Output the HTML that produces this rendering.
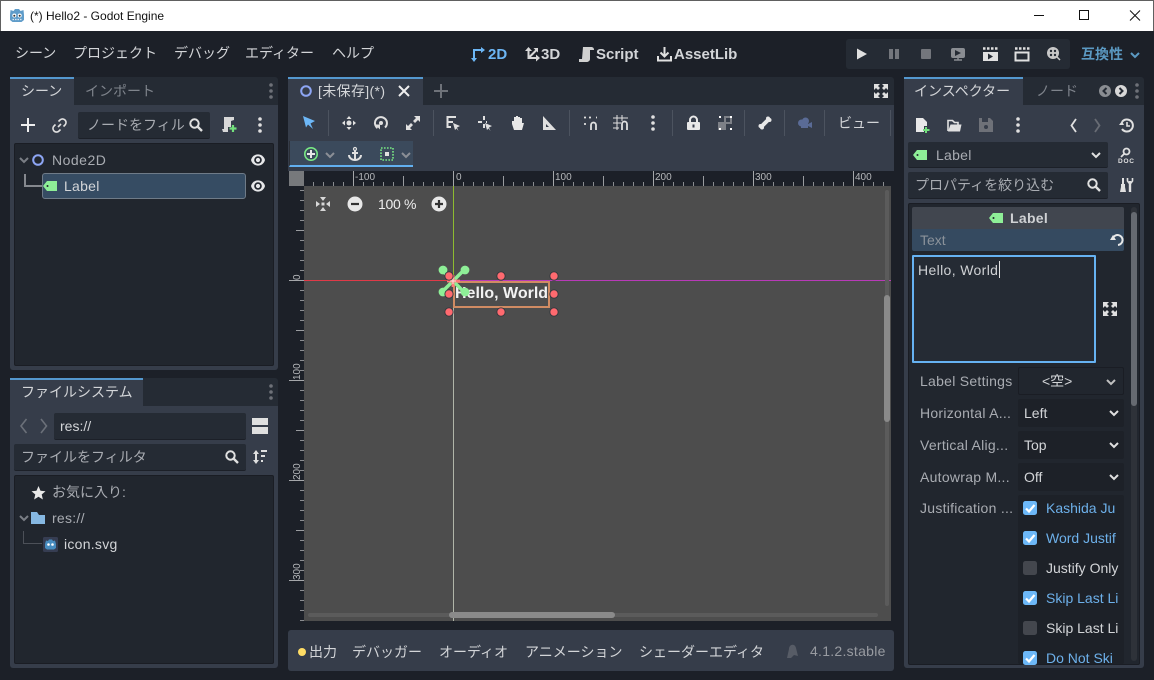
<!DOCTYPE html>
<html><head><meta charset="utf-8"><style>
html,body{margin:0;padding:0;background:#1c2028;}
#w{position:relative;width:1154px;height:680px;overflow:hidden;background:#1c2028;font-family:"Liberation Sans","Noto Sans CJK JP",sans-serif;font-size:14px;color:#d3d5d8;}
#w div{position:absolute;box-sizing:border-box;}
.t{white-space:nowrap;height:20px;line-height:20px;}
.l{letter-spacing:.27px}
.d{color:#7f848c}.m{color:#a9acb2}
.p{background:#363d4a}.f{background:#252b34;border-radius:2px;border-bottom:1px solid #1c2028}
.b{background:#21262e;border:1px solid #1a1d24;border-radius:2px}
.s{width:1px;height:26px;top:110px;background:#4c535f}
.bd{font-weight:bold;font-size:15px}
svg{position:absolute;overflow:visible}
</style></head><body><div id="w">
<svg width="0" height="0" style="position:absolute"><defs>
<g id="eye"><path d="M-7 0C-5-7.500 5-7.500 7 0C5 7.500-5 7.500-7 0Z" fill="#e6e7e9"/><circle r="3.800" fill="#21262e"/><circle r="2.100" fill="#e6e7e9"/></g>
<g id="tag"><path d="M0 0L4-5H14V5H4Z" fill="#8eef97"/><circle cx="4.500" cy="0" r="1" fill="#21262e"/></g>
<g id="mag"><circle cx="-1.500" cy="-1.500" r="4.200" fill="none" stroke="#e0e0e0" stroke-width="2"/><path d="M1.500 1.500L6 6" stroke="#e0e0e0" stroke-width="2.400"/></g>
<g id="keb"><circle cy="-6" r="1.800"/><circle r="1.800"/><circle cy="6" r="1.800"/></g>
<g id="chev"><path d="M-4-2L0 2L4-2" fill="none" stroke="currentColor" stroke-width="2"/></g>
<g id="exp" fill="#e0e0e0"><path d="M-7-7H-1L-3-5L-1-3L-3-1L-5-3L-7-1Z"/><path d="M7-7V-1L5-3L3-1L1-3L3-5L1-7Z"/><path d="M-7 7V1L-5 3L-3 1L-1 3L-3 5L-1 7Z"/><path d="M7 7H1L3 5L1 3L3 1L5 3L7 1Z"/></g>
<g id="cb1"><rect x="-7" y="-7" width="14" height="14" rx="2.500" fill="#6db8f8"/><path d="M-4 0.500L-1 3.500L4.500-3" fill="none" stroke="#fff" stroke-width="2.200"/></g>
<g id="cb0"><rect x="-7" y="-7" width="14" height="14" rx="2.500" fill="#44474e"/></g>
<g id="h"><circle r="4.600" fill="#33373d"/><circle r="3.700" fill="#ff6a6f"/></g>
</defs></svg>

<!-- title bar -->
<div style="left:0;top:0;width:1154px;height:31px;background:#fff;border:1px solid #606060;border-bottom:0"></div>
<svg style="left:9px;top:8px" width="16" height="15" viewBox="0 0 15 15"><path d="M0.500 7L1 2L4 3L5.500 1H9.500L11 3L14 2L14.500 7V12L12 14H3L.5 12Z" fill="#5f9cc9"/><circle cx="4.800" cy="7.500" r="2" fill="#fff"/><circle cx="10.200" cy="7.500" r="2" fill="#fff"/><circle cx="4.800" cy="7.800" r="1" fill="#333"/><circle cx="10.200" cy="7.800" r="1" fill="#333"/><path d="M3 11.500H12" stroke="#dbe8f3" stroke-width="1.200" stroke-dasharray="1.500 1"/></svg>
<div class="t" style="left:30px;top:6px;font-size:12px;color:#111">(*) Hello2 - Godot Engine</div>
<svg style="left:1030px;top:8px" width="115" height="16"><path d="M4 7.500H14" stroke="#111" stroke-width="1"/><rect x="49.500" y="2.500" width="9" height="9" fill="none" stroke="#111"/><path d="M100 2.500L110 12.500M110 2.500L100 12.500" stroke="#111"/></svg>

<!-- menu -->
<div class="t" style="left:15px;top:43px">シーン</div>
<div class="t" style="left:73px;top:43px">プロジェクト</div>
<div class="t" style="left:174px;top:43px">デバッグ</div>
<div class="t" style="left:245px;top:43px">エディター</div>
<div class="t" style="left:332px;top:43px">ヘルプ</div>

<svg style="left:471px;top:47px" width="15" height="15"><path d="M3 15L0 11H2V2H10V0L14 3L10 6V4H4V11H6Z" fill="#6cb6f5"/></svg>
<div class="t bd" style="left:488px;top:45px;color:#6cb6f5">2D</div>
<svg style="left:525px;top:47px" width="15" height="15"><path d="M3.500 1V11H13M3.500 11L12 2.500" fill="none" stroke="#d8d8d8" stroke-width="2"/><path d="M0 4L3.500 0L7 4ZM11 7.500L15 11L11 14.500ZM8.500 1H13V5.500Z" fill="#d8d8d8"/></svg>
<div class="t bd" style="left:541px;top:45px">3D</div>
<svg style="left:579px;top:47px" width="15" height="15"><path d="M4 0H12C14 0 15 1 15 3H11V12C11 14 9 15 7.500 15H0V12H3Z" fill="#d0d0d0"/></svg>
<div class="t bd" style="left:596px;top:45px">Script</div>
<svg style="left:657px;top:47px" width="15" height="15"><path d="M7.500 0V9M3.500 5.500L7.500 9.500L11.500 5.500M1 9V13.500H14V9" fill="none" stroke="#e0e0e0" stroke-width="2"/></svg>
<div class="t bd" style="left:674px;top:45px">AssetLib</div>

<div style="left:846px;top:39px;width:224px;height:30px;background:#252b34;border-radius:3px"></div>
<svg style="left:846px;top:39px" width="224" height="30">
<path d="M11 9.500L21 15L11 20.500Z" fill="#e0e0e0"/>
<rect x="43" y="10" width="4" height="10" fill="#73767c"/><rect x="49" y="10" width="4" height="10" fill="#73767c"/>
<rect x="75" y="10" width="10" height="10" rx="1" fill="#73767c"/>
<rect x="105" y="9" width="14" height="10" rx="2" fill="#8a8d92"/><path d="M109 11L115 14L109 17Z" fill="#252b34"/><path d="M108 21H116M112 19V21" stroke="#8a8d92" stroke-width="1.500"/>
<rect x="137" y="13" width="15" height="9" fill="#e0e0e0"/><path d="M137 9.500H152" stroke="#e0e0e0" stroke-width="2.500" stroke-dasharray="2.500 1.500"/><path d="M142 14.500L147 17.500L142 20.500Z" fill="#252b34"/>
<path d="M169.500 13.500H182.500V21.500H169.500Z" fill="none" stroke="#e0e0e0" stroke-width="2"/><path d="M169 9.500H184" stroke="#e0e0e0" stroke-width="2.500" stroke-dasharray="2.500 1.500"/>
<circle cx="207" cy="14" r="6" fill="#c8c8c8"/><circle cx="205" cy="12" r="1.200" fill="#252b34"/><circle cx="209" cy="12" r="1.200" fill="#252b34"/><circle cx="205" cy="16" r="1.200" fill="#252b34"/><circle cx="209" cy="16" r="1.200" fill="#252b34"/><path d="M211 18L214 21" stroke="#c8c8c8" stroke-width="1.500"/>
</svg>
<div class="t" style="left:1081px;top:44px;color:#5b99c2;font-weight:bold">互換性</div>
<svg style="left:1135px;top:53px;color:#5b99c2" width="10" height="8"><use href="#chev" x="0" y="2"/></svg>

<!-- LEFT: scene dock -->
<div style="left:10px;top:77px;width:268px;height:28px;background:#252b34;border-radius:3px 3px 0 0"></div>
<div class="p" style="left:10px;top:77px;width:64px;height:28px;border-top:2px solid #5498cf"></div>
<div class="p" style="left:10px;top:105px;width:268px;height:265px;border-radius:0 0 3px 3px"></div>
<div class="t" style="left:21px;top:81px">シーン</div>
<div class="t d" style="left:85px;top:81px">インポート</div>
<svg style="left:271px;top:91px;fill:#6e7178" width="1" height="1"><use href="#keb"/></svg>
<svg style="left:20px;top:117px" width="16" height="16"><path d="M8 1V15M1 8H15" stroke="#eee" stroke-width="2"/></svg>
<svg style="left:52px;top:118px" width="15" height="15"><path d="M6 9L9 6M6.500 3.500L8 2A3 3 0 0 1 13 7L11.500 8.500M3.500 6.500L2 8A3 3 0 0 0 7 13L8.500 11.500" fill="none" stroke="#e0e0e0" stroke-width="1.600"/></svg>
<div class="f" style="left:78px;top:112px;width:132px;height:27px"></div>
<div class="t m" style="left:87px;top:115px">ノードをフィル</div>
<svg style="left:196px;top:125px" width="1" height="1"><use href="#mag"/></svg>
<svg style="left:221px;top:117px" width="16" height="16"><path d="M3 0H13V3L10 4V10H7V15H2L1 12H3Z" fill="#d8d8d8"/><path d="M12 8V15M8.500 11.500H15.500" stroke="#72e07c" stroke-width="2.200"/></svg>
<svg style="left:260px;top:125px;fill:#e0e0e0" width="1" height="1"><use href="#keb"/></svg>
<div class="b" style="left:14px;top:143px;width:260px;height:223px"></div>
<svg style="left:24px;top:160px;color:#7a7e85" width="1" height="1"><use href="#chev"/></svg>
<svg style="left:32px;top:154px" width="12" height="12"><circle cx="6" cy="6" r="4.800" fill="none" stroke="#8da5f3" stroke-width="2"/></svg>
<div class="t m l" style="left:52px;top:150px;letter-spacing:.5px">Node2D</div>
<svg style="left:258px;top:160px" width="1" height="1"><use href="#eye"/></svg>
<div style="left:24px;top:174px;width:19px;height:13px;border-left:2px solid #85888e;border-bottom:2px solid #85888e"></div>
<div style="left:42px;top:173px;width:204px;height:26px;background:#364c63;border:1px solid #6f7b88;border-radius:3px"></div>
<svg style="left:43px;top:186px" width="1" height="1"><use href="#tag"/></svg>
<div class="t l" style="left:64px;top:176px">Label</div>
<svg style="left:258px;top:186px" width="1" height="1"><use href="#eye"/></svg>

<!-- LEFT: filesystem dock -->
<div style="left:10px;top:378px;width:268px;height:28px;background:#252b34;border-radius:3px 3px 0 0"></div>
<div class="p" style="left:10px;top:378px;width:133px;height:28px;border-top:2px solid #5498cf"></div>
<div class="p" style="left:10px;top:406px;width:268px;height:262px;border-radius:0 0 3px 3px"></div>
<div class="t" style="left:21px;top:382px">ファイルシステム</div>
<svg style="left:271px;top:392px;fill:#6e7178" width="1" height="1"><use href="#keb"/></svg>
<svg style="left:20px;top:418px" width="30" height="16"><path d="M6.500 1L1 8L6.500 15M21 1L26.500 8L21 15" fill="none" stroke="#6b7079" stroke-width="1.600"/></svg>
<div class="f" style="left:54px;top:413px;width:192px;height:27px"></div>
<div class="t" style="left:60px;top:416px">res://</div>
<div style="left:252px;top:418px;width:16px;height:7px;background:#e0e0e0"></div>
<div style="left:252px;top:427px;width:16px;height:7px;background:#e0e0e0"></div>
<div class="f" style="left:14px;top:444px;width:232px;height:27px"></div>
<div class="t m" style="left:21px;top:447px">ファイルをフィルタ</div>
<svg style="left:232px;top:457px" width="1" height="1"><use href="#mag"/></svg>
<svg style="left:253px;top:449px" width="15" height="16"><path d="M3 1L6 5H4V11H6L3 15L0 11H2V5H0Z" fill="#e0e0e0"/><path d="M8 2H14M8 7H12M8 12H10" stroke="#e0e0e0" stroke-width="2"/></svg>
<div class="b" style="left:14px;top:475px;width:260px;height:189px"></div>
<svg style="left:31px;top:486px" width="15" height="14"><path d="M7.500 0L9.500 4.800L14.500 5.200L10.700 8.500L11.900 13.500L7.500 10.800L3.100 13.500L4.300 8.500L.5 5.200L5.500 4.800Z" fill="#e8e8e8"/></svg>
<div class="t m" style="left:52px;top:482px">お気に入り:</div>
<svg style="left:24px;top:518px;color:#7a7e85" width="1" height="1"><use href="#chev"/></svg>
<svg style="left:31px;top:512px" width="14" height="13"><path d="M0 0H6L8 3H14V12H0Z" fill="#86b8e2"/></svg>
<div class="t m l" style="left:52px;top:508px">res://</div>
<div style="left:23px;top:531px;width:19px;height:13px;border-left:1px solid #4c5058;border-bottom:1px solid #4c5058"></div>
<svg style="left:43px;top:537px" width="15" height="15"><rect width="15" height="15" rx="1.500" fill="#363d52"/><path d="M2 7L3 3.500L5 4L6 2.500H9L10 4L12 3.500L13 7V11L11 12.500H4L2 11Z" fill="#478cbf"/><circle cx="5.500" cy="7.500" r="1.300" fill="#fff"/><circle cx="9.500" cy="7.500" r="1.300" fill="#fff"/></svg>
<div class="t l" style="left:64px;top:534px">icon.svg</div>

<!-- CENTER -->
<div style="left:288px;top:77px;width:606px;height:28px;background:#252b34;border-radius:3px 3px 0 0"></div>
<div class="p" style="left:288px;top:77px;width:135px;height:28px;border-top:2px solid #5498cf"></div>
<svg style="left:300px;top:85px" width="12" height="12"><circle cx="6" cy="6" r="4.800" fill="none" stroke="#8da5f3" stroke-width="2"/></svg>
<div class="t" style="left:318px;top:81px;letter-spacing:.35px">[未保存](*)</div>
<svg style="left:398px;top:85px" width="12" height="12"><path d="M1 1L11 11M11 1L1 11" stroke="#eee" stroke-width="2"/></svg>
<svg style="left:434px;top:84px" width="14" height="14"><path d="M7 0V14M0 7H14" stroke="#6e7279" stroke-width="2"/></svg>
<svg style="left:881px;top:91px" width="1" height="1"><use href="#exp"/></svg>
<div class="p" style="left:288px;top:105px;width:606px;height:66px"></div>

<svg style="left:303px;top:116px" width="13" height="14"><path d="M0 0L12 5L7.500 7.500L10 13L5 8.500L3 11.500Z" fill="#6db8f8"/></svg>
<div class="s" style="left:328px"></div>
<svg style="left:342px;top:116px" width="14" height="14"><circle cx="7" cy="7" r="2.500" fill="#e0e0e0"/><path d="M7 0L9.500 3H4.500ZM7 14L4.500 11H9.500ZM0 7L3 4.500V9.500ZM14 7L11 9.500V4.500Z" fill="#e0e0e0"/></svg>
<svg style="left:374px;top:116px" width="14" height="14"><path d="M3.500 12A6 6 0 1 1 11 11.500" fill="none" stroke="#e0e0e0" stroke-width="2"/><circle cx="7" cy="7" r="2" fill="#e0e0e0"/><path d="M1 8.500H6V13.500Z" fill="#e0e0e0"/></svg>
<svg style="left:406px;top:116px" width="14" height="14"><path d="M8 0H14V6L12 4L9 7L7 5L10 2ZM0 14V8L2 10L5 7L7 9L4 12L6 14Z" fill="#e0e0e0"/></svg>
<div class="s" style="left:433px"></div>
<svg style="left:446px;top:116px" width="15" height="15"><path d="M1 1H10M1 6H7M1 11H5M1.500 0V12" stroke="#e0e0e0" stroke-width="2" fill="none"/><path d="M7 7L14 10L11 11.500L12.500 15L10.500 12.500L9 14Z" fill="#e0e0e0"/></svg>
<svg style="left:478px;top:116px" width="15" height="15"><path d="M0 6H4M6 0V4M6 8V12M8 6H9" stroke="#e0e0e0" stroke-width="2"/><path d="M7 7L14 10L11 11.500L12.500 15L10.500 12.500L9 14Z" fill="#e0e0e0"/></svg>
<svg style="left:510px;top:115px" width="14" height="16"><path d="M2 9V6H4V2H6V1H8V2H10V3H12V8H14L12 15H4Z" fill="#e8e8e8"/></svg>
<svg style="left:542px;top:116px" width="14" height="14"><path d="M1 0L14 14H1ZM4 8V11H7Z" fill="#e0e0e0" fill-rule="evenodd"/></svg>
<div class="s" style="left:569px"></div>
<svg style="left:583px;top:116px" width="15" height="15"><path d="M1 1.500H3M1 8H3M6 1.500H8M13 1.500H14" stroke="#e0e0e0" stroke-width="1.800"/><path d="M8 14V9A2.500 2.500 0 0 1 13 9V14" fill="none" stroke="#e0e0e0" stroke-width="1.800"/></svg>
<svg style="left:613px;top:115px" width="16" height="16"><path d="M0 3H15M0 8H8M0 13H6M4 0V15M9 0V6" stroke="#e0e0e0" stroke-width="1"/><path d="M9 15V9A2.500 2.500 0 0 1 14 9V15" fill="none" stroke="#e0e0e0" stroke-width="1.800"/></svg>
<svg style="left:653px;top:123px;fill:#e0e0e0" width="1" height="1"><use href="#keb"/></svg>
<div class="s" style="left:672px"></div>
<svg style="left:687px;top:116px" width="13" height="14"><path d="M3 6V4A3.500 3.500 0 0 1 10 4V6" fill="none" stroke="#e8e8e8" stroke-width="2"/><rect y="6" width="13" height="8" rx="1" fill="#e8e8e8"/><rect x="5.500" y="8.500" width="2" height="3" fill="#363d4a"/></svg>
<svg style="left:718px;top:116px" width="15" height="14"><rect y="6" width="8" height="8" fill="#7d8087"/><rect x="7" y="1" width="6" height="6" fill="none" stroke="#7d8087" stroke-width="2"/><path d="M1 0H3V2H1ZM12 0H14V2H12ZM1 12H3V14H1ZM12 12H14V14H12Z" fill="#fff"/></svg>
<div class="s" style="left:744px"></div>
<svg style="left:758px;top:116px" width="14" height="14"><path d="M3 11L11 3" stroke="#e8e8e8" stroke-width="4"/><circle cx="2.500" cy="10" r="2" fill="#e8e8e8"/><circle cx="4" cy="11.500" r="2" fill="#e8e8e8"/><circle cx="10" cy="2.500" r="2" fill="#e8e8e8"/><circle cx="11.500" cy="4" r="2" fill="#e8e8e8"/></svg>
<div class="s" style="left:784px"></div>
<svg style="left:798px;top:116px" width="14" height="14"><circle cx="3.500" cy="7" r="3.500" fill="#5a6b96"/><circle cx="7.500" cy="5" r="3.500" fill="#5a6b96"/><rect x="3" y="6" width="7" height="6" fill="#5a6b96"/><path d="M10 8L14 6V12L10 10Z" fill="#5a6b96"/></svg>
<div class="s" style="left:824px"></div>
<div class="t" style="left:838px;top:113px">ビュー</div>
<div class="s" style="left:890px"></div>

<div style="left:289px;top:141px;width:124px;height:26px;background:#3b4a5c;border-bottom:2px solid #62b0f0;border-left:1px solid #2c3038"></div>
<svg style="left:304px;top:147px" width="14" height="14"><circle cx="7" cy="7" r="6.200" fill="none" stroke="#78e884" stroke-width="1.600"/><path d="M7 3V11M3 7H11" stroke="#e8e8e8" stroke-width="2"/></svg>
<svg style="left:330px;top:155px;color:#8b8f96" width="1" height="1"><use href="#chev"/></svg>
<svg style="left:348px;top:147px" width="14" height="14"><circle cx="7" cy="2" r="1.500" fill="none" stroke="#e0e0e0" stroke-width="1.200"/><path d="M7 3V13M4 6H10M1 8C1 11 4 13 7 13C10 13 13 11 13 8" fill="none" stroke="#e0e0e0" stroke-width="2"/></svg>
<svg style="left:380px;top:147px" width="14" height="14"><rect x="1" y="1" width="12" height="12" fill="none" stroke="#78e884" stroke-width="1.600" stroke-dasharray="1.600 1.400"/><rect x="5" y="5" width="4" height="4" fill="#e0e0e0"/></svg>
<svg style="left:406px;top:155px;color:#8b8f96" width="1" height="1"><use href="#chev"/></svg>

<!-- viewport -->
<div style="left:289px;top:171px;width:602px;height:450px;background:#1c2028"></div>
<div style="left:289px;top:171px;width:15px;height:15px;background:#77797c"></div>
<div style="left:304px;top:186px;width:587px;height:435px;background:#4d4d4d"></div>
<!-- rulers -->
<div style="left:304px;top:182px;width:587px;height:4px;background:repeating-linear-gradient(90deg,transparent 0 9px,#8a8c90 9px 10px)"></div>
<div style="left:304px;top:176px;width:587px;height:10px;background:repeating-linear-gradient(90deg,transparent 0 49px,#9a9ca0 49px 50px)"></div>
<div style="left:303px;top:171px;width:588px;height:15px;background:repeating-linear-gradient(90deg,transparent 0 50px,#a5a7aa 50px 51px,transparent 51px 100px)"></div>
<div style="left:300px;top:186px;width:4px;height:435px;background:repeating-linear-gradient(180deg,transparent 0 4px,#8a8c90 4px 5px,transparent 5px 10px)"></div>
<div style="left:296px;top:186px;width:8px;height:435px;background:repeating-linear-gradient(180deg,transparent 0 44px,#9a9ca0 44px 45px,transparent 45px 50px)"></div>
<div style="left:289px;top:186px;width:15px;height:435px;background:repeating-linear-gradient(180deg,transparent 0 94px,#a5a7aa 94px 95px,transparent 95px 100px)"></div>
<div class="t" style="left:355px;top:168px;font-size:10px;color:#b5b7ba">-100</div>
<div class="t" style="left:456px;top:168px;font-size:10px;color:#b5b7ba">0</div>
<div class="t" style="left:555px;top:168px;font-size:10px;color:#b5b7ba">100</div>
<div class="t" style="left:655px;top:168px;font-size:10px;color:#b5b7ba">200</div>
<div class="t" style="left:755px;top:168px;font-size:10px;color:#b5b7ba">300</div>
<div class="t" style="left:855px;top:168px;font-size:10px;color:#b5b7ba">400</div>
<svg style="left:289px;top:186px" width="15" height="435"><g font-family="Liberation Sans" font-size="10" fill="#b5b7ba"><text transform="translate(11 94) rotate(-90)">0</text><text transform="translate(11 194) rotate(-90)">100</text><text transform="translate(11 294) rotate(-90)">200</text><text transform="translate(11 394) rotate(-90)">300</text></g></svg>
<!-- axes -->
<div style="left:304px;top:280px;width:149px;height:1px;background:#e03a48"></div>
<div style="left:453px;top:280px;width:438px;height:1px;background:#b83ab8"></div>
<div style="left:453px;top:186px;width:1px;height:94px;background:#8dbb30"></div>
<div style="left:453px;top:281px;width:1px;height:340px;background:#b0b5a8"></div>
<!-- overlay controls -->
<svg style="left:316px;top:197px" width="14" height="14"><path d="M0 4L4 7L0 10ZM14 4L10 7L14 10ZM4 0L7 4L10 0ZM4 14L7 10L10 14Z" fill="#d8d8d8"/><rect x="5.500" y="5.500" width="3" height="3" fill="#d8d8d8"/></svg>
<svg style="left:347px;top:196px" width="16" height="16"><circle cx="8" cy="8" r="7.500" fill="#e8e8e8"/><path d="M4 8H12" stroke="#333" stroke-width="2.200"/></svg>
<div class="t" style="left:378px;top:194px;color:#eee;letter-spacing:-.3px">100 %</div>
<svg style="left:431px;top:196px" width="16" height="16"><circle cx="8" cy="8" r="7.500" fill="#e8e8e8"/><path d="M4 8H12M8 4V12" stroke="#333" stroke-width="2.200"/></svg>
<!-- label gizmo -->
<div style="left:453px;top:281px;width:97px;height:27px;border:2px solid #d08b63"></div>
<div class="t" style="left:455px;top:284px;font-size:16px;color:#f2f2f2;font-weight:bold">Hello, World</div>
<svg style="left:434px;top:260px" width="130" height="60">
<g stroke="#8eef97" stroke-width="3.500"><path d="M19 21L9 11M19 21L29 11M19 21L9 31M19 21L29 31"/></g>
<g fill="#8eef97"><circle cx="9" cy="10" r="4.400"/><circle cx="31" cy="10" r="4.400"/><circle cx="9" cy="32" r="4.400"/><circle cx="31" cy="32" r="4.400"/></g>
<path d="M13 21H26M19 15V27" stroke="#ff7a7a" stroke-width="2.800"/>
<path d="M16 21H22M19 18V24" stroke="#f5e8e0" stroke-width="1"/>
<use href="#h" x="15" y="16"/><use href="#h" x="67" y="16"/><use href="#h" x="120" y="16"/>
<use href="#h" x="15" y="34"/><use href="#h" x="120" y="34"/>
<use href="#h" x="15" y="52"/><use href="#h" x="67" y="52"/><use href="#h" x="120" y="52"/>
</svg>
<!-- scrollbars -->
<div style="left:885px;top:190px;width:4px;height:416px;background:#5b5b5b;border-radius:2px"></div>
<div style="left:884px;top:295px;width:6px;height:127px;background:#8a8a8a;border-radius:3px"></div>
<div style="left:308px;top:613px;width:570px;height:4px;background:#5b5b5b;border-radius:2px"></div>
<div style="left:449px;top:612px;width:166px;height:6px;background:#8a8a8a;border-radius:3px"></div>

<!-- bottom bar -->
<div class="p" style="left:288px;top:630px;width:606px;height:41px;border-radius:3px"></div>
<svg style="left:298px;top:648px" width="8" height="8"><circle cx="4" cy="4" r="4" fill="#ffdd65"/></svg>
<div class="t" style="left:309px;top:642px">出力</div>
<div class="t" style="left:352px;top:642px">デバッガー</div>
<div class="t" style="left:439px;top:642px">オーディオ</div>
<div class="t" style="left:525px;top:642px">アニメーション</div>
<div class="t" style="left:639px;top:642px">シェーダーエディタ</div>
<svg style="left:786px;top:644px" width="13" height="15"><path d="M1 14L3 5C3 0 9-1 10 4L12 12L8 11L5 14Z" fill="#575c66"/></svg>
<div class="t m l" style="left:810px;top:641px;color:#989ba1">4.1.2.stable</div>

<!-- RIGHT -->
<div style="left:904px;top:77px;width:240px;height:28px;background:#252b34;border-radius:3px 3px 0 0"></div>
<div class="p" style="left:904px;top:77px;width:119px;height:28px;border-top:2px solid #5498cf"></div>
<div class="p" style="left:904px;top:105px;width:240px;height:563px;border-radius:0 0 3px 3px"></div>
<div class="t" style="left:914px;top:81px">インスペクター</div>
<div class="t d" style="left:1036px;top:81px">ノード</div>
<svg style="left:1098px;top:84px" width="30" height="14"><circle cx="7" cy="7" r="6" fill="#8a8d92"/><path d="M8.500 4L5.500 7L8.500 10" fill="none" stroke="#252b34" stroke-width="2"/><circle cx="23" cy="7" r="6" fill="#d8d8d8"/><path d="M21.500 4L24.500 7L21.500 10" fill="none" stroke="#252b34" stroke-width="2"/></svg>
<svg style="left:1137px;top:91px;fill:#6e7178" width="1" height="1"><use href="#keb"/></svg>
<svg style="left:916px;top:118px" width="14" height="15"><path d="M0 0H7L11 4V8H8V14H0Z" fill="#e8e8e8"/><path d="M10 9V15M7 12H13.500" stroke="#72e07c" stroke-width="2"/></svg>
<svg style="left:947px;top:119px" width="15" height="14"><path d="M1 12V1.500H5.500L7.500 3.500H11V6" fill="none" stroke="#e0e0e0" stroke-width="1.600"/><path d="M1 12.500L3.500 5.500H14.500L13 12.500Z" fill="#e0e0e0"/></svg>
<svg style="left:979px;top:118px" width="14" height="14"><path d="M0 0H11L14 3V14H0Z" fill="#6e7178"/><rect x="3" y="0" width="6" height="4" fill="#363d4a"/><circle cx="7" cy="9" r="2" fill="#363d4a"/></svg>
<svg style="left:1018px;top:125px;fill:#e0e0e0" width="1" height="1"><use href="#keb"/></svg>
<svg style="left:1070px;top:118px" width="34" height="15"><path d="M6 1L1.500 7.500L6 14" fill="none" stroke="#e0e0e0" stroke-width="1.800"/><path d="M25 1L29.500 7.500L25 14" fill="none" stroke="#686c74" stroke-width="1.800"/></svg>
<svg style="left:1119px;top:118px" width="14" height="14"><path d="M3 4A6 6 0 1 1 3 11" fill="none" stroke="#e0e0e0" stroke-width="2"/><path d="M0 7H5L3 3Z" fill="#e0e0e0"/><path d="M8 4V8H11" fill="none" stroke="#e0e0e0" stroke-width="1.600"/></svg>
<div class="f" style="left:908px;top:142px;width:200px;height:26px"></div>
<svg style="left:913px;top:155px" width="1" height="1"><use href="#tag"/></svg>
<div class="t m l" style="left:936px;top:145px">Label</div>
<svg style="left:1096px;top:155px;color:#e0e0e0" width="1" height="1"><use href="#chev"/></svg>
<svg style="left:1118px;top:147px" width="16" height="17"><circle cx="8.500" cy="4.500" r="3" fill="none" stroke="#e0e0e0" stroke-width="1.800"/><path d="M6 7L3 10" stroke="#e0e0e0" stroke-width="1.800"/><text x="0" y="16" font-family="Liberation Sans" font-size="6.500" font-weight="bold" fill="#e0e0e0" textLength="16">DOC</text></svg>
<div class="f" style="left:908px;top:172px;width:200px;height:27px"></div>
<div class="t m" style="left:915px;top:175px">プロパティを絞り込む</div>
<svg style="left:1094px;top:185px" width="1" height="1"><use href="#mag"/></svg>
<svg style="left:1120px;top:178px" width="13" height="15"><path d="M3 0V6" stroke="#e0e0e0" stroke-width="2"/><path d="M1 6H5V9L6 14H0L1 9Z" fill="#e0e0e0"/><path d="M10 3V14" stroke="#e0e0e0" stroke-width="2.400"/><path d="M7.500 0V3L9 5H11L12.500 3V0" fill="none" stroke="#e0e0e0" stroke-width="1.600"/></svg>

<div class="b" style="left:908px;top:203px;width:232px;height:462px"></div>
<div style="left:912px;top:207px;width:212px;height:22px;background:#41464f;border-radius:2px 2px 0 0"></div>
<svg style="left:989px;top:218px" width="1" height="1"><use href="#tag"/></svg>
<div class="t" style="left:1010px;top:208px;font-weight:bold;color:#cfd1d4;letter-spacing:.3px">Label</div>
<div style="left:912px;top:229px;width:212px;height:22px;background:#354a60;border-radius:0 0 2px 2px"></div>
<div class="t" style="left:920px;top:230px;color:#8b929a">Text</div>
<svg style="left:1110px;top:233px" width="14" height="14"><path d="M3 5A5 5 0 1 1 8 12" fill="none" stroke="#e8e8e8" stroke-width="2"/><path d="M0 7H6L3 2Z" fill="#e8e8e8"/></svg>
<div style="left:912px;top:255px;width:184px;height:108px;background:#252b34;border:2px solid #66b2f2;border-radius:1px"></div>
<div class="t" style="left:918px;top:260px;color:#cfd1d4;letter-spacing:.36px">Hello, World</div>
<div style="left:999px;top:261px;width:1px;height:17px;background:#e0e0e0"></div>
<svg style="left:1110px;top:309px" width="1" height="1"><use href="#exp"/></svg>

<div class="t m l" style="left:920px;top:371px">Label Settings</div>
<div class="b" style="left:1018px;top:367px;width:106px;height:28px"></div>
<div class="t" style="left:1042px;top:371px">&lt;空&gt;</div>
<svg style="left:1111px;top:382px;color:#c0c0c0" width="1" height="1"><use href="#chev"/></svg>
<div class="t m l" style="left:920px;top:403px">Horizontal A...</div>
<div style="left:1018px;top:399px;width:106px;height:28px;background:#1d2128;border-radius:2px"></div>
<div class="t" style="left:1024px;top:403px">Left</div>
<svg style="left:1114px;top:413px;color:#e0e0e0" width="1" height="1"><use href="#chev"/></svg>
<div class="t m l" style="left:920px;top:435px">Vertical Alig...</div>
<div style="left:1018px;top:431px;width:106px;height:28px;background:#1d2128;border-radius:2px"></div>
<div class="t" style="left:1024px;top:435px">Top</div>
<svg style="left:1114px;top:445px;color:#e0e0e0" width="1" height="1"><use href="#chev"/></svg>
<div class="t m l" style="left:920px;top:467px">Autowrap M...</div>
<div style="left:1018px;top:463px;width:106px;height:28px;background:#1d2128;border-radius:2px"></div>
<div class="t" style="left:1024px;top:467px">Off</div>
<svg style="left:1114px;top:477px;color:#e0e0e0" width="1" height="1"><use href="#chev"/></svg>
<div class="t m l" style="left:920px;top:498px">Justification ...</div>
<div style="left:1018px;top:495px;width:106px;height:169px;background:#1d2128;border-radius:2px"></div>
<svg style="left:1030px;top:508px" width="1" height="1"><use href="#cb1"/><use href="#cb1" y="30"/><use href="#cb0" y="60"/><use href="#cb1" y="90"/><use href="#cb0" y="120"/><use href="#cb1" y="150"/></svg>
<div class="t" style="left:1046px;top:498px;color:#6db0ea">Kashida Ju</div>
<div class="t" style="left:1046px;top:528px;color:#6db0ea">Word Justif</div>
<div class="t" style="left:1046px;top:558px">Justify Only</div>
<div class="t" style="left:1046px;top:588px;color:#6db0ea">Skip Last Li</div>
<div class="t" style="left:1046px;top:618px">Skip Last Li</div>
<div class="t" style="left:1046px;top:648px;color:#6db0ea">Do Not Ski</div>
<div style="left:1131px;top:207px;width:6px;height:454px;background:#2e3239;border-radius:3px"></div>
<div style="left:1131px;top:212px;width:6px;height:194px;background:#666a71;border-radius:3px"></div>
</div></body></html>
